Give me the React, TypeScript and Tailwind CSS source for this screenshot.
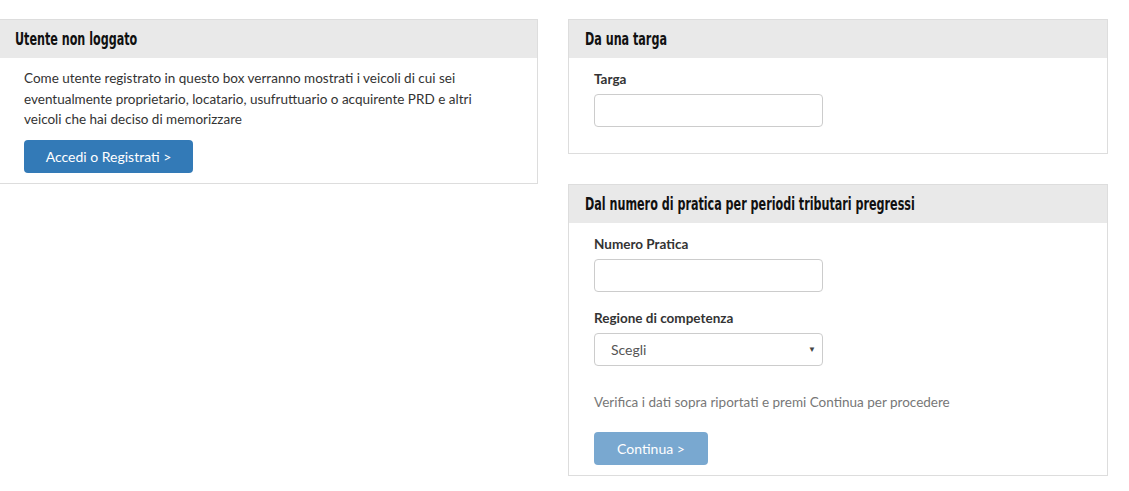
import React from 'react';

const bodyFont = { fontFamily: 'Lato, "Open Sans", sans-serif' };

function PanelHeader({ title }: { title: string }) {
  return (
    <div className="h-[38px] bg-[#e9e9e9] flex items-center px-[16px] pt-[2px] text-[#111]">
      <span
        className="inline-block text-[17px] font-bold origin-left scale-x-[0.73] whitespace-nowrap"
        style={{ fontFamily: '"DejaVu Sans Condensed", "DejaVu Sans", sans-serif' }}
      >
        {title}
      </span>
    </div>
  );
}

function Field({ label, children, className = '' }: { label: string; children: React.ReactNode; className?: string }) {
  return (
    <div className={className}>
      <label className="block text-[13.5px] leading-[20px] font-bold text-[#333] mb-[5px]">{label}</label>
      {children}
    </div>
  );
}

export default function App() {
  return (
    <div className="w-[1129px] min-h-[491px] bg-white text-[#333]" style={bodyFont}>
      <div className="flex gap-[30px] pt-[19px] ml-[-2px]">
        {/* colonna sinistra */}
        <div className="w-[540px] self-start border border-[#ddd]">
          <PanelHeader title="Utente non loggato" />
          <div className="px-[25px] pt-[10px] pb-[10px]">
            <p className="text-[13.5px] leading-[20.5px] mb-[10px] pr-[20px]">
              Come utente registrato in questo box verranno mostrati i veicoli di cui sei eventualmente
              proprietario, locatario, usufruttuario o acquirente PRD e altri veicoli che hai deciso di
              memorizzare
            </p>
            <button className="w-[169px] h-[33px] rounded-[4px] bg-[#337ab7] text-white text-[14px]">
              Accedi o Registrati &gt;
            </button>
          </div>
        </div>

        {/* colonna destra */}
        <div className="w-[540px] flex flex-col gap-[30px]">
          <div className="border border-[#ddd]">
            <PanelHeader title="Da una targa" />
            <div className="px-[25px] pt-[11px] pb-[26px]">
              <Field label="Targa">
                <input
                  type="text"
                  className="block w-[229px] h-[33px] border border-[#ccc] rounded-[4px] px-3 bg-white"
                />
              </Field>
            </div>
          </div>

          <div className="border border-[#ddd]">
            <PanelHeader title="Dal numero di pratica per periodi tributari pregressi" />
            <div className="px-[25px] pt-[11px] pb-[10px]">
              <Field label="Numero Pratica">
                <input
                  type="text"
                  className="block w-[229px] h-[33px] border border-[#ccc] rounded-[4px] px-3 bg-white"
                />
              </Field>
              <Field label="Regione di competenza" className="mt-[16px]">
                <div className="relative w-[229px] h-[33px] border border-[#ccc] rounded-[4px] bg-white flex items-center pl-[16px] text-[14px] text-[#555]">
                  Scegli
                  <span className="absolute right-[6px] top-[9px] text-[8px] text-[#444]">▼</span>
                </div>
              </Field>
              <p className="mt-[26px] text-[13.5px] leading-[20px] text-[#777]">
                Verifica i dati sopra riportati e premi Continua per procedere
              </p>
              <button className="mt-[20px] w-[114px] h-[33px] rounded-[4px] bg-[#337ab7] opacity-65 text-white text-[14px]">
                Continua &gt;
              </button>
            </div>
          </div>
        </div>
      </div>
    </div>
  );
}
